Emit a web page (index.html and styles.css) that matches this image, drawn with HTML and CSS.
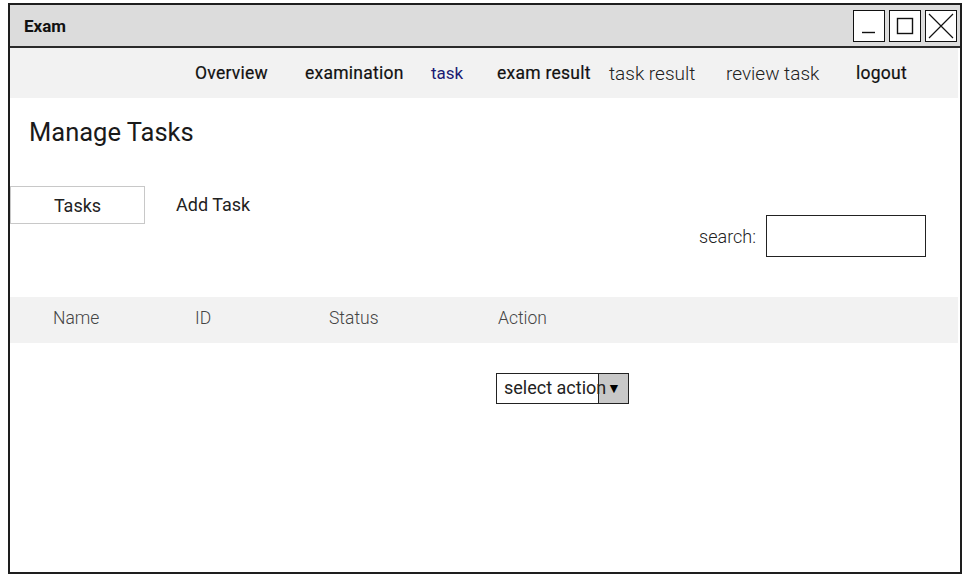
FILE: index.html
```html
<!DOCTYPE html>
<html>
<head>
<meta charset="utf-8">
<link rel="stylesheet" href="styles.css">
</head>
<body>
<div class="window">
  <div class="titlebar">
    <span class="title">Exam</span>
    <div class="winbtns">
      <span class="winbtn"><svg width="30" height="30" viewBox="0 0 30 30"><line x1="8" y1="21.5" x2="21" y2="21.5" stroke="#111" stroke-width="1.4"/></svg></span>
      <span class="winbtn"><svg width="30" height="30" viewBox="0 0 30 30"><rect x="7.5" y="7.5" width="15" height="15" fill="none" stroke="#111" stroke-width="1.4"/></svg></span>
      <span class="winbtn"><svg width="30" height="30" viewBox="0 0 30 30"><path d="M3 3 L27 27 M27 3 L3 27" stroke="#111" stroke-width="1.2" fill="none"/></svg></span>
    </div>
  </div>
  <nav class="nav">
    <a class="nav-item w-overview strong">Overview</a>
    <a class="nav-item w-exam strong">examination</a>
    <a class="nav-item w-task active">task</a>
    <a class="nav-item w-examres strong">exam result</a>
    <a class="nav-item w-taskres light">task result</a>
    <a class="nav-item w-review light">review task</a>
    <a class="nav-item strong">logout</a>
  </nav>
  <h1 class="page-title">Manage Tasks</h1>
  <div class="toolbar">
    <div class="tabs">
      <span class="tab selected">Tasks</span>
      <span class="tab">Add Task</span>
    </div>
    <div class="search">
      <span class="search-label">search:</span>
      <span class="search-box"></span>
    </div>
  </div>
  <div class="table-head">
    <span class="col col-name">Name</span>
    <span class="col col-id">ID</span>
    <span class="col col-status">Status</span>
    <span class="col">Action</span>
  </div>
  <div class="table-row">
    <div class="select">
      <span class="select-text">select action</span>
      <span class="select-arrow">&#9660;</span>
    </div>
  </div>
</div>
</body>
</html>
```
FILE: styles.css
```css
* { box-sizing: border-box; }
html, body { margin: 0; padding: 0; background: #fff; }
body {
  font-family: Roboto, "Liberation Sans", sans-serif;
  color: #222;
  padding: 3px 0 0 8px;
}
.window {
  width: 954px;
  height: 571px;
  border: 2px solid #1e1e1e;
  display: flex;
  flex-direction: column;
}
.titlebar {
  height: 43px;
  background: #dcdcdc;
  border-bottom: 2px solid #2a2a2a;
  display: flex;
  align-items: center;
  justify-content: space-between;
  padding: 0 3px 0 14px;
}
.title {
  font-size: 17px;
  font-weight: 700;
  color: #111;
  margin-top: 1px;
}
.winbtns { display: flex; gap: 4px; margin-top: 1px; }
.winbtn {
  width: 32px;
  height: 32px;
  border: 1px solid #111;
  background: #fff;
  display: flex;
  align-items: center;
  justify-content: center;
}
.winbtn svg { display: block; }
.nav {
  height: 50px;
  margin-right: 2px;
  background: #f2f2f2;
  display: flex;
  align-items: center;
  padding-left: 185px;
  font-size: 17px;
}
.nav-item { color: #222; white-space: nowrap; }
.nav-item.strong {
  font-size: 17.5px;
  font-weight: 400;
  color: #111;
  -webkit-text-stroke: 0.2px #111;
  letter-spacing: 0.25px;
}
.nav-item.light { font-size: 19px; font-weight: 300; color: #222; }
.nav-item.active { color: #1a1a72; }
.w-overview { width: 110px; }
.w-exam { width: 126px; }
.w-task { width: 66px; }
.w-examres { width: 112px; }
.w-taskres { width: 117px; }
.w-review { width: 130px; }
.page-title {
  margin: 20px 0 0 19px;
  font-size: 25.5px;
  font-weight: 400;
  color: #1a1a1a;
  line-height: 28px;
}
.toolbar {
  display: flex;
  justify-content: space-between;
  margin-top: 40px;
  height: 90px;
}
.tabs { display: flex; align-items: flex-start; height: 38px; }
.tab {
  font-size: 18px;
  color: #222;
  height: 38px;
  line-height: 38px;
  padding: 0 31px;
}
.tab.selected {
  width: 135px;
  text-align: center;
  border: 1px solid #c8c8c8;
  padding: 0;
}
.search {
  display: flex;
  align-items: center;
  margin: 29px 34px 0 0;
  height: 42px;
}
.search-label { font-size: 18px; font-weight: 300; color: #222; margin-right: 10px; }
.search-box {
  width: 160px;
  height: 42px;
  border: 1.5px solid #222;
  background: #fff;
}
.table-head {
  margin: 21px 2px 0 0;
  height: 46px;
  background: #f2f2f2;
  display: flex;
  align-items: center;
  font-size: 17.5px;
  font-weight: 300;
  color: #444;
  padding: 0 0 5px 43px;
}
.col-name { width: 142px; }
.col-id { width: 134px; }
.col-status { width: 169px; }
.table-row { padding: 30px 0 0 486px; }
.select {
  display: flex;
  width: 133px;
  height: 31px;
  border: 1.5px solid #222;
}
.select-text {
  width: 101px;
  flex: none;
  font-size: 18px;
  font-weight: 400;
  color: #222;
  padding-left: 7px;
  line-height: 27px;
  white-space: nowrap;
  position: relative;
  z-index: 1;
}
.select-arrow {
  flex: 1;
  background: #c8c8c8;
  border-left: 1.5px solid #222;
  font-size: 14px;
  line-height: 28px;
  padding-left: 8px;
  color: #000;
}
```
